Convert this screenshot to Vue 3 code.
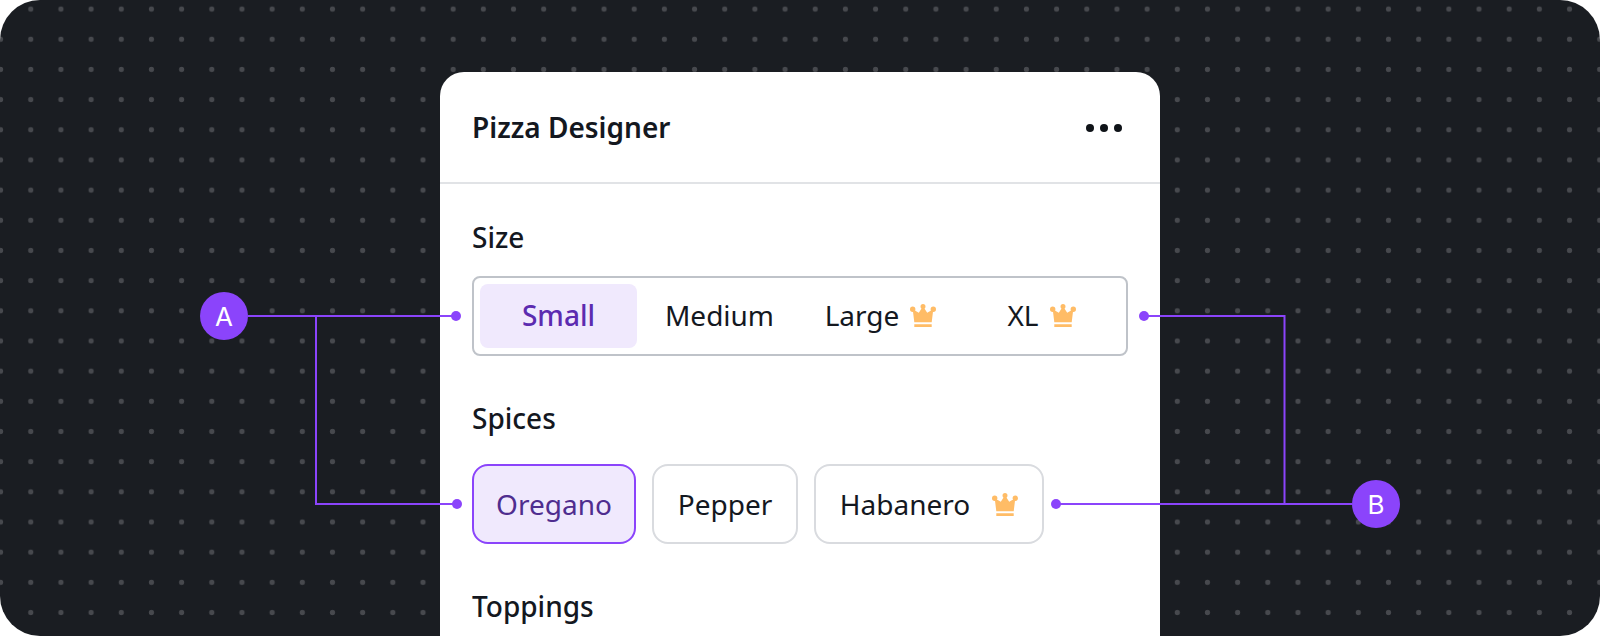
<script setup>
const sizes = [
  { label: 'Small', active: true },
  { label: 'Medium' },
  { label: 'Large', premium: true },
  { label: 'XL', premium: true },
]

const spices = [
  { label: 'Oregano', active: true },
  { label: 'Pepper' },
  { label: 'Habanero', premium: true },
]

const crownPath =
  'M2.7 5.3 8.8 8.8 13 2.3 17.2 8.8 23.3 5.3 21.7 18.3H4.3ZM0 5.3a2.7 2.7 0 1 1 5.4 0a2.7 2.7 0 1 1-5.4 0ZM10.5 2.5a2.5 2.5 0 1 1 5 0a2.5 2.5 0 1 1-5 0ZM20.6 5.3a2.7 2.7 0 1 1 5.4 0a2.7 2.7 0 1 1-5.4 0ZM4.3 20.2H21.7V23H4.3Z'
</script>

<template>
  <div class="stage">
    <section class="card">
      <header class="card-head">
        <h1 class="card-title">Pizza Designer</h1>
        <span class="more"><i /><i /><i /></span>
      </header>

      <div class="card-body">
        <h2 class="field-label">Size</h2>
        <div class="segmented">
          <div
            v-for="item in sizes"
            :key="item.label"
            class="segment"
            :class="{ active: item.active }"
          >
            <span>{{ item.label }}</span>
            <svg v-if="item.premium" class="crown" viewBox="0 0 26 23">
              <path :d="crownPath" />
            </svg>
          </div>
        </div>

        <h2 class="field-label spaced">Spices</h2>
        <div class="chips">
          <div
            v-for="item in spices"
            :key="item.label"
            class="chip"
            :class="{ active: item.active }"
          >
            <span>{{ item.label }}</span>
            <svg v-if="item.premium" class="crown" viewBox="0 0 26 23">
              <path :d="crownPath" />
            </svg>
          </div>
        </div>

        <h2 class="field-label spaced">Toppings</h2>
      </div>
    </section>

    <!-- annotation lines sit on top of the card -->
    <svg class="wires" viewBox="0 0 1600 636">
      <path d="M248 316H456M316 316V504H457M1144 316H1284.5V504M1056 504H1352" />
      <circle cx="456" cy="316" r="5" />
      <circle cx="457" cy="504" r="5" />
      <circle cx="1144" cy="316" r="5" />
      <circle cx="1056" cy="504" r="5" />
    </svg>
    <span class="marker marker-a">A</span>
    <span class="marker marker-b">B</span>
  </div>
</template>

<style>
html,
body {
  margin: 0;
  background: #fff;
}
</style>

<style scoped>
.stage {
  position: relative;
  box-sizing: border-box;
  width: 1600px;
  height: 636px;
  padding-top: 72px;
  overflow: hidden;
  border-radius: 40px;
  background-color: #1a1d22;
  background-image: radial-gradient(circle, #47494e 2.4px, transparent 3px);
  background-position: -14.5px -6px;
  background-size: 30.18px 30.18px;
  font-family: 'Noto Sans', 'Open Sans', sans-serif;
  color: #14181f;
}

.card {
  width: 720px;
  height: 564px;
  margin: 0 auto;
  border-radius: 24px 24px 0 0;
  background: #fff;
}

.card-head {
  display: flex;
  align-items: center;
  justify-content: space-between;
  box-sizing: border-box;
  height: 112px;
  padding: 1px 38px 0 32px;
  border-bottom: 2px solid #e1e3e6;
}

.card-title {
  margin: 0;
  padding-bottom: 2px;
  font-size: 28px;
  font-weight: 600;
  line-height: 36px;
}

.more {
  display: flex;
  gap: 6px;
}

.more i {
  width: 8px;
  height: 8px;
  border-radius: 50%;
  background: #0f1318;
}

.card-body {
  padding: 37px 32px 0;
}

.field-label {
  margin: 0 0 23px;
  font-size: 28px;
  font-weight: 500;
  line-height: 32px;
}

.field-label.spaced {
  margin-top: 46px;
}

.segmented {
  display: grid;
  grid-template-columns: repeat(4, 1fr);
  gap: 4px;
  box-sizing: border-box;
  height: 80px;
  padding: 6px;
  border: 2px solid #bfc3c9;
  border-radius: 8px;
}

.segment {
  display: flex;
  align-items: center;
  justify-content: center;
  gap: 11px;
  padding-bottom: 2px;
  border-radius: 8px;
  font-size: 28px;
}

.segment.active {
  background: #f0e9fd;
  color: #5c2bb0;
  font-weight: 500;
}

.chips {
  display: flex;
  gap: 16px;
  margin-top: 30px;
}

.chip {
  display: flex;
  align-items: center;
  justify-content: center;
  gap: 22px;
  box-sizing: border-box;
  width: 164px;
  height: 80px;
  border: 2px solid #d9dbdf;
  border-radius: 16px;
  font-size: 28px;
}

.chip:nth-child(2) {
  width: 146px;
}

.chip:nth-child(3) {
  width: 230px;
}

.chip.active {
  border-color: #8b44fb;
  background: #f0e9fd;
  color: #4f2d8f;
}

.crown {
  width: 26px;
  height: 23px;
  fill: #ffbc66;
}

.wires {
  position: absolute;
  top: 0;
  left: 0;
  width: 1600px;
  height: 636px;
  pointer-events: none;
}

.wires path {
  fill: none;
  stroke: #8b44fb;
  stroke-width: 2;
}

.wires circle {
  fill: #8b44fb;
}

.marker {
  position: absolute;
  display: flex;
  align-items: center;
  justify-content: center;
  width: 48px;
  height: 48px;
  border-radius: 50%;
  background: #8b44fb;
  color: #fff;
  font-family: Inter, sans-serif;
  font-size: 26px;
  font-weight: 400;
}

.marker-a {
  top: 292px;
  left: 200px;
}

.marker-b {
  top: 480px;
  left: 1352px;
}
</style>
